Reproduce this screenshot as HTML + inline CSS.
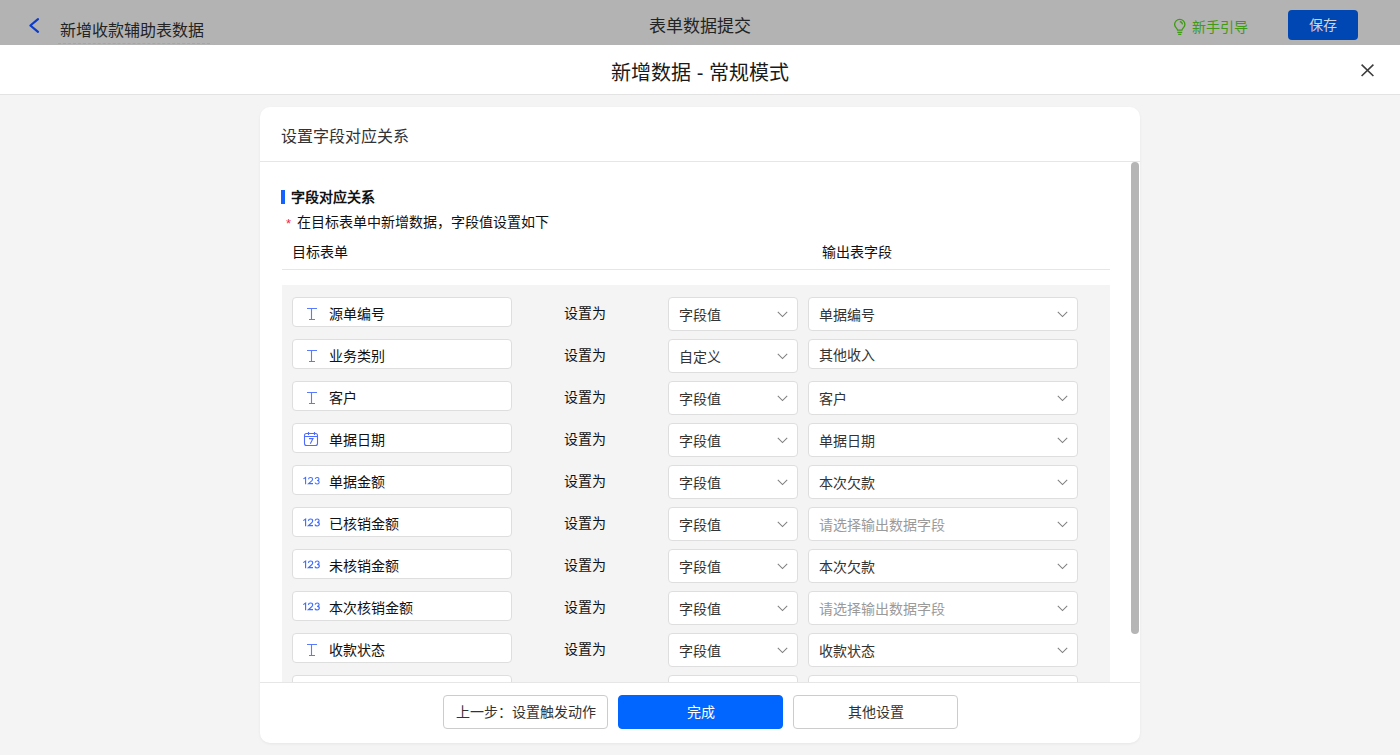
<!DOCTYPE html>
<html lang="zh-CN">
<head>
<meta charset="utf-8">
<style>
*{box-sizing:border-box;margin:0;padding:0}
html,body{width:1400px;height:755px;overflow:hidden}
body{font-family:"Liberation Sans",sans-serif;background:#f4f4f4;position:relative;color:#1a1a1a}
.abs{position:absolute}
.t{position:absolute;white-space:nowrap;line-height:20px;height:20px}
.hdr{left:0;top:0;width:1400px;height:45px;background:#b3b3b3}
.mtitle{left:0;top:45px;width:1400px;height:50px;background:#fff;border-bottom:1px solid #e3e3e3}
.card{left:260px;top:107px;width:880px;height:636px;background:#fff;border-radius:10px;box-shadow:0 1px 3px rgba(0,0,0,0.06)}
.cardhd{left:260px;top:161px;width:880px;height:1px;background:#e6e6e6}
.clip{left:0;top:162px;width:1400px;height:520px;overflow:hidden}
.grey{left:282px;top:123px;width:828px;height:600px;background:#f4f4f4}
.row{position:absolute;left:0;width:1400px;height:42px}
.fbox{position:absolute;left:292px;top:0;width:220px;height:30px;background:#fff;border:1px solid #dedede;border-radius:4px}
.lab{position:absolute;left:329px;top:6.5px;font-size:14px;line-height:20px;white-space:nowrap;color:#111}
.setas{position:absolute;left:564px;top:5.5px;font-size:14px;line-height:20px;white-space:nowrap;color:#111}
.sel1{position:absolute;left:668px;top:0;width:130px;height:34px;background:#fff;border:1px solid #dedede;border-radius:4px}
.sel2{position:absolute;left:808px;top:0;width:270px;height:34px;background:#fff;border:1px solid #dedede;border-radius:4px}
.sel2.inp{height:30px}
.sv{position:absolute;left:10px;top:6.5px;font-size:14px;line-height:20px;white-space:nowrap;color:#333}
.inp .sv{top:4.5px}
.sv.ph{color:#9a9a9a}
.chev{position:absolute;right:9px;top:13px}
.ic{position:absolute}
.num{position:absolute;left:302px;top:10px;font-size:10.5px;line-height:12px;color:#3f6cff;letter-spacing:0.3px}
.foot{left:260px;top:682px;width:880px;height:1px;background:#e6e6e6}
.btn{position:absolute;top:695px;width:165px;height:34px;border:1px solid #cccccc;border-radius:4px;background:#fff;font-size:14px;line-height:32px;text-align:center;color:#333;white-space:nowrap}
</style>
</head>
<body>
<div class="abs hdr"></div>
<svg class="abs" style="left:27px;top:16px" width="14" height="19" viewBox="0 0 14 19"><path d="M11 3.2 L3.4 9.5 L11 15.8" fill="none" stroke="#0b3bcc" stroke-width="2.2" stroke-linecap="round" stroke-linejoin="round"/></svg>
<div class="t" style="left:60px;top:20.5px;font-size:16px;color:#232323">新增收款辅助表数据</div>
<div class="abs" style="left:58px;top:43px;width:152px;height:0;border-top:1px dashed #a6a6a6"></div>
<div class="t" style="left:600px;width:200px;text-align:center;top:17px;font-size:17px;color:#232323">表单数据提交</div>
<svg class="abs" style="left:1172px;top:18px" width="16" height="19" viewBox="0 0 16 19"><path d="M5.6 12.2 C5.6 10.6 2.6 9.3 2.6 6.5 A5.15 5.15 0 0 1 12.9 6.5 C12.9 9.3 9.9 10.6 9.9 12.2 Z" fill="none" stroke="#3f9a14" stroke-width="1.3"/><path d="M5.3 14.4 H10.2 M6.2 16.4 H9.3" stroke="#3f9a14" stroke-width="1.2"/><path d="M7.8 3.6 A3.1 3.1 0 0 1 10.5 6.4" fill="none" stroke="#3f9a14" stroke-width="1.2"/></svg>
<div class="t" style="left:1192px;top:17px;font-size:14px;color:#3f9a14">新手引导</div>
<div class="abs" style="left:1288px;top:10px;width:70px;height:30px;background:#0047b3;border-radius:4px;color:#d4d4d8;font-size:14px;line-height:30px;text-align:center">保存</div>

<div class="abs mtitle"></div>
<div class="t" style="left:500px;width:400px;text-align:center;top:62.5px;font-size:20px;line-height:20px;color:#1a1a1a">新增数据 - 常规模式</div>
<svg class="abs" style="left:1359px;top:62px" width="17" height="17" viewBox="0 0 17 17"><path d="M2.6 2.6 L14.4 14 M14.4 2.6 L2.6 14" stroke="#3c3c3c" stroke-width="1.6"/></svg>

<div class="abs card"></div>
<div class="t" style="left:281px;top:127px;font-size:16px;color:#333">设置字段对应关系</div>
<div class="abs cardhd"></div>
<div class="abs clip">
  <div class="t" style="left:281px;top:28px;width:4px;height:14px;background:#1662ff"></div>
  <div class="t" style="left:291px;top:25px;font-size:14px;font-weight:bold;color:#111">字段对应关系</div>
  <div class="t" style="left:286px;top:51.5px;font-size:13px;color:#f2224f">*</div>
  <div class="t" style="left:297px;top:50px;font-size:14px;color:#111">在目标表单中新增数据，字段值设置如下</div>
  <div class="t" style="left:292px;top:80px;font-size:14px;color:#111">目标表单</div>
  <div class="t" style="left:822px;top:80px;font-size:14px;color:#111">输出表字段</div>
  <div class="abs" style="left:282px;top:107px;width:828px;height:1px;background:#e6e6e6"></div>
  <div class="abs grey"></div>
  <div class="abs" style="left:0;top:-162px;width:1400px;height:900px">
<div class="row" style="top:297px">
<div class="fbox"></div><svg class="ic" style="left:306px;top:10px" width="12" height="14" viewBox="0 0 12 14"><path d="M1 1.5 H11 M5.5 1.5 V12.5 M3 12.5 H9" fill="none" stroke="#5b7bff" stroke-width="1.1"/></svg><div class="lab">源单编号</div>
<div class="setas">设置为</div>
<div class="sel1"><span class="sv">字段值</span><svg class="chev" width="11" height="7" viewBox="0 0 11 7"><path d="M0.8 0.8 L5.5 5.6 L10.2 0.8" fill="none" stroke="#808080" stroke-width="1.05"/></svg></div>
<div class="sel2"><span class="sv">单据编号</span><svg class="chev" width="11" height="7" viewBox="0 0 11 7"><path d="M0.8 0.8 L5.5 5.6 L10.2 0.8" fill="none" stroke="#808080" stroke-width="1.05"/></svg></div>
</div>
<div class="row" style="top:339px">
<div class="fbox"></div><svg class="ic" style="left:306px;top:10px" width="12" height="14" viewBox="0 0 12 14"><path d="M1 1.5 H11 M5.5 1.5 V12.5 M3 12.5 H9" fill="none" stroke="#5b7bff" stroke-width="1.1"/></svg><div class="lab">业务类别</div>
<div class="setas">设置为</div>
<div class="sel1"><span class="sv">自定义</span><svg class="chev" width="11" height="7" viewBox="0 0 11 7"><path d="M0.8 0.8 L5.5 5.6 L10.2 0.8" fill="none" stroke="#808080" stroke-width="1.05"/></svg></div>
<div class="sel2 inp"><span class="sv">其他收入</span></div>
</div>
<div class="row" style="top:381px">
<div class="fbox"></div><svg class="ic" style="left:306px;top:10px" width="12" height="14" viewBox="0 0 12 14"><path d="M1 1.5 H11 M5.5 1.5 V12.5 M3 12.5 H9" fill="none" stroke="#5b7bff" stroke-width="1.1"/></svg><div class="lab">客户</div>
<div class="setas">设置为</div>
<div class="sel1"><span class="sv">字段值</span><svg class="chev" width="11" height="7" viewBox="0 0 11 7"><path d="M0.8 0.8 L5.5 5.6 L10.2 0.8" fill="none" stroke="#808080" stroke-width="1.05"/></svg></div>
<div class="sel2"><span class="sv">客户</span><svg class="chev" width="11" height="7" viewBox="0 0 11 7"><path d="M0.8 0.8 L5.5 5.6 L10.2 0.8" fill="none" stroke="#808080" stroke-width="1.05"/></svg></div>
</div>
<div class="row" style="top:423px">
<div class="fbox"></div><svg class="ic" style="left:303px;top:8px" width="16" height="16" viewBox="0 0 16 16"><rect x="1.5" y="2.5" width="13" height="12" rx="2" fill="none" stroke="#4f6cfd" stroke-width="1.1"/><path d="M1.5 5.5 H14.5 M5.5 1 V4 M11.5 1 V4" stroke="#4f6cfd" stroke-width="1.1"/><path d="M6 7.6 H10 L7.3 12.8" fill="none" stroke="#4f6cfd" stroke-width="1.1"/></svg><div class="lab">单据日期</div>
<div class="setas">设置为</div>
<div class="sel1"><span class="sv">字段值</span><svg class="chev" width="11" height="7" viewBox="0 0 11 7"><path d="M0.8 0.8 L5.5 5.6 L10.2 0.8" fill="none" stroke="#808080" stroke-width="1.05"/></svg></div>
<div class="sel2"><span class="sv">单据日期</span><svg class="chev" width="11" height="7" viewBox="0 0 11 7"><path d="M0.8 0.8 L5.5 5.6 L10.2 0.8" fill="none" stroke="#808080" stroke-width="1.05"/></svg></div>
</div>
<div class="row" style="top:465px">
<div class="fbox"></div><svg class="ic" style="left:302px;top:10px" width="20" height="11" viewBox="0 0 20 11"><path d="M1.4 3.9 L3.6 2.5 V9.2 M6.5 4.2 C6.6 3.1 7.4 2.5 8.6 2.5 C9.8 2.5 10.6 3.2 10.6 4.2 C10.6 5.3 9.8 5.9 8.6 6.8 L6.5 8.6 H11 M13.2 3.9 C13.5 3 14.2 2.5 15.2 2.5 C16.3 2.5 17 3.1 17 4 C17 4.9 16.2 5.5 15.1 5.5 C16.4 5.5 17.2 6.1 17.2 7.2 C17.2 8.3 16.4 8.9 15.1 8.9 C14.1 8.9 13.3 8.4 13 7.6" fill="none" stroke="#3e6cff" stroke-width="1.05"/></svg><div class="lab">单据金额</div>
<div class="setas">设置为</div>
<div class="sel1"><span class="sv">字段值</span><svg class="chev" width="11" height="7" viewBox="0 0 11 7"><path d="M0.8 0.8 L5.5 5.6 L10.2 0.8" fill="none" stroke="#808080" stroke-width="1.05"/></svg></div>
<div class="sel2"><span class="sv">本次欠款</span><svg class="chev" width="11" height="7" viewBox="0 0 11 7"><path d="M0.8 0.8 L5.5 5.6 L10.2 0.8" fill="none" stroke="#808080" stroke-width="1.05"/></svg></div>
</div>
<div class="row" style="top:507px">
<div class="fbox"></div><svg class="ic" style="left:302px;top:10px" width="20" height="11" viewBox="0 0 20 11"><path d="M1.3 3.6 L3.6 2 V9.3 M6.4 3.9 C6.5 2.7 7.4 2 8.6 2 C9.9 2 10.7 2.8 10.7 3.9 C10.7 5.1 9.8 5.8 8.6 6.7 L6.4 8.6 H11 M13.1 3.6 C13.4 2.6 14.2 2 15.2 2 C16.4 2 17.1 2.7 17.1 3.7 C17.1 4.7 16.3 5.3 15.1 5.3 C16.5 5.3 17.3 6 17.3 7.1 C17.3 8.3 16.4 9 15.1 9 C14 9 13.2 8.4 12.9 7.5" fill="none" stroke="#3e6cff" stroke-width="1.15"/></svg><div class="lab">已核销金额</div>
<div class="setas">设置为</div>
<div class="sel1"><span class="sv">字段值</span><svg class="chev" width="11" height="7" viewBox="0 0 11 7"><path d="M0.8 0.8 L5.5 5.6 L10.2 0.8" fill="none" stroke="#808080" stroke-width="1.05"/></svg></div>
<div class="sel2"><span class="sv ph">请选择输出数据字段</span><svg class="chev" width="11" height="7" viewBox="0 0 11 7"><path d="M0.8 0.8 L5.5 5.6 L10.2 0.8" fill="none" stroke="#808080" stroke-width="1.05"/></svg></div>
</div>
<div class="row" style="top:549px">
<div class="fbox"></div><svg class="ic" style="left:302px;top:10px" width="20" height="11" viewBox="0 0 20 11"><path d="M1.3 3.6 L3.6 2 V9.3 M6.4 3.9 C6.5 2.7 7.4 2 8.6 2 C9.9 2 10.7 2.8 10.7 3.9 C10.7 5.1 9.8 5.8 8.6 6.7 L6.4 8.6 H11 M13.1 3.6 C13.4 2.6 14.2 2 15.2 2 C16.4 2 17.1 2.7 17.1 3.7 C17.1 4.7 16.3 5.3 15.1 5.3 C16.5 5.3 17.3 6 17.3 7.1 C17.3 8.3 16.4 9 15.1 9 C14 9 13.2 8.4 12.9 7.5" fill="none" stroke="#3e6cff" stroke-width="1.15"/></svg><div class="lab">未核销金额</div>
<div class="setas">设置为</div>
<div class="sel1"><span class="sv">字段值</span><svg class="chev" width="11" height="7" viewBox="0 0 11 7"><path d="M0.8 0.8 L5.5 5.6 L10.2 0.8" fill="none" stroke="#808080" stroke-width="1.05"/></svg></div>
<div class="sel2"><span class="sv">本次欠款</span><svg class="chev" width="11" height="7" viewBox="0 0 11 7"><path d="M0.8 0.8 L5.5 5.6 L10.2 0.8" fill="none" stroke="#808080" stroke-width="1.05"/></svg></div>
</div>
<div class="row" style="top:591px">
<div class="fbox"></div><svg class="ic" style="left:302px;top:10px" width="20" height="11" viewBox="0 0 20 11"><path d="M1.3 3.6 L3.6 2 V9.3 M6.4 3.9 C6.5 2.7 7.4 2 8.6 2 C9.9 2 10.7 2.8 10.7 3.9 C10.7 5.1 9.8 5.8 8.6 6.7 L6.4 8.6 H11 M13.1 3.6 C13.4 2.6 14.2 2 15.2 2 C16.4 2 17.1 2.7 17.1 3.7 C17.1 4.7 16.3 5.3 15.1 5.3 C16.5 5.3 17.3 6 17.3 7.1 C17.3 8.3 16.4 9 15.1 9 C14 9 13.2 8.4 12.9 7.5" fill="none" stroke="#3e6cff" stroke-width="1.15"/></svg><div class="lab">本次核销金额</div>
<div class="setas">设置为</div>
<div class="sel1"><span class="sv">字段值</span><svg class="chev" width="11" height="7" viewBox="0 0 11 7"><path d="M0.8 0.8 L5.5 5.6 L10.2 0.8" fill="none" stroke="#808080" stroke-width="1.05"/></svg></div>
<div class="sel2"><span class="sv ph">请选择输出数据字段</span><svg class="chev" width="11" height="7" viewBox="0 0 11 7"><path d="M0.8 0.8 L5.5 5.6 L10.2 0.8" fill="none" stroke="#808080" stroke-width="1.05"/></svg></div>
</div>
<div class="row" style="top:633px">
<div class="fbox"></div><svg class="ic" style="left:306px;top:10px" width="12" height="14" viewBox="0 0 12 14"><path d="M1 1.5 H11 M5.5 1.5 V12.5 M3 12.5 H9" fill="none" stroke="#5b7bff" stroke-width="1.1"/></svg><div class="lab">收款状态</div>
<div class="setas">设置为</div>
<div class="sel1"><span class="sv">字段值</span><svg class="chev" width="11" height="7" viewBox="0 0 11 7"><path d="M0.8 0.8 L5.5 5.6 L10.2 0.8" fill="none" stroke="#808080" stroke-width="1.05"/></svg></div>
<div class="sel2"><span class="sv">收款状态</span><svg class="chev" width="11" height="7" viewBox="0 0 11 7"><path d="M0.8 0.8 L5.5 5.6 L10.2 0.8" fill="none" stroke="#808080" stroke-width="1.05"/></svg></div>
</div>
<div class="row" style="top:675px">
<div class="fbox"></div><svg class="ic" style="left:306px;top:10px" width="12" height="14" viewBox="0 0 12 14"><path d="M1 1.5 H11 M5.5 1.5 V12.5 M3 12.5 H9" fill="none" stroke="#5b7bff" stroke-width="1.1"/></svg><div class="lab"></div>
<div class="sel1"><span class="sv"></span></div>
<div class="sel2"><span class="sv"></span></div>
</div>
  </div>
  <div class="abs" style="left:1131px;top:0;width:8px;height:472px;background:#b5b5b5;border-radius:4px"></div>
</div>
<div class="abs foot"></div>
<div class="btn" style="left:443px">上一步：设置触发动作</div>
<div class="btn" style="left:618px;background:#0066ff;border-color:#0066ff;color:#fff">完成</div>
<div class="btn" style="left:793px">其他设置</div>
</body>
</html>
